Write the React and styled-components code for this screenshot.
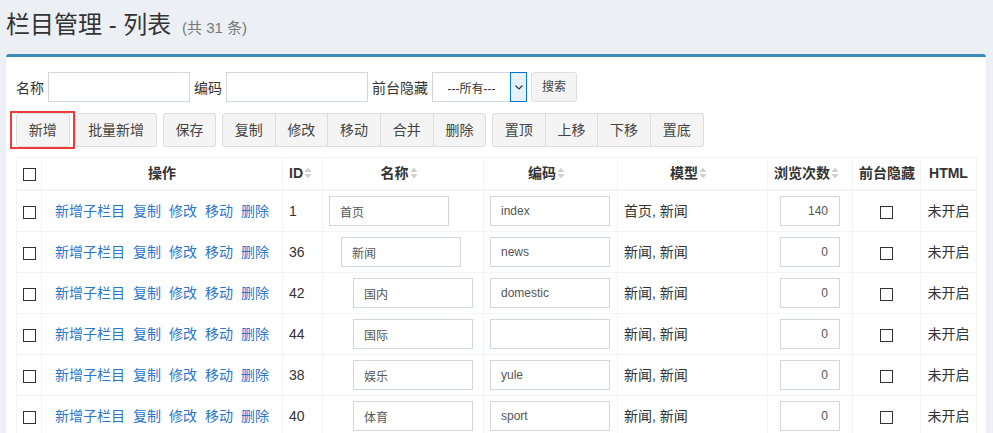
import React from "react";
import styled, { createGlobalStyle } from "styled-components";

const Global = createGlobalStyle`
  html, body { margin: 0; padding: 0; background: #ecf0f5; }
  body {
    font-family: "Liberation Sans", "Noto Sans CJK SC", sans-serif;
    font-size: 14px;
    color: #333;
  }
  * { box-sizing: border-box; }
`;

const Page = styled.div`
  padding: 10px 7px 0 6px;
`;

const Title = styled.h1`
  margin: 0;
  height: 30px;
  font-size: 24px;
  line-height: 30px;
  font-weight: 400;
  color: #333;
  white-space: nowrap;
`;

const Sub = styled.small`
  font-size: 15px;
  line-height: 1;
  color: #777;
  padding-left: 4px;
`;

const Panel = styled.div`
  margin-top: 14px;
  background: #fff;
  border-top: 3px solid #3c8dbc;
  border-radius: 3px;
  box-shadow: 0 1px 1px rgba(0, 0, 0, 0.1);
  padding: 15px 10px 10px;
`;

const FormRow = styled.div`
  display: flex;
  align-items: center;
  gap: 4px;
  height: 30px;
`;

const Label = styled.span`
  font-size: 14px;
  color: #333;
  white-space: nowrap;
`;

const TextInput = styled.input`
  width: ${(p) => p.$w || 142}px;
  height: 30px;
  border: 1px solid #d2d6de;
  border-radius: 0;
  padding: 0 ${(p) => (p.$right ? 11 : 10)}px;
  font-family: inherit;
  font-size: 12px;
  color: #555;
  text-align: ${(p) => (p.$right ? "right" : "left")};
  margin-left: ${(p) => p.$indent || 0}px;
  outline: none;
  background: #fff;
  vertical-align: middle;
`;

const SelectBox = styled.div`
  width: 95px;
  height: 30px;
  border: 1px solid #d2d6de;
  display: flex;
  align-items: stretch;
  background: #fff;
`;

const SelectText = styled.span`
  flex: 1;
  font-size: 12px;
  color: #333;
  display: flex;
  align-items: center;
  justify-content: center;
`;

const SelectArrow = styled.span`
  width: 17px;
  margin: -1px -1px -1px 0;
  border: 1px solid #0078d7;
  background: #e5f1fb;
  display: flex;
  align-items: center;
  justify-content: center;
`;

const Btn = styled.button`
  font-family: inherit;
  font-size: ${(p) => (p.$sm ? 12 : 14)}px;
  line-height: ${(p) => (p.$sm ? 18 : 20)}px;
  padding: ${(p) => (p.$sm ? "5px 10px" : "6px 11.85px")};
  background: #f4f4f4;
  border: 1px solid #ddd;
  border-radius: 3px;
  color: #444;
  white-space: nowrap;
  cursor: pointer;
  position: relative;
`;

const Toolbar = styled.div`
  display: flex;
  align-items: center;
  gap: 5.6px;
  margin-top: 11px;
`;

const Group = styled.div`
  display: flex;
  & > ${Btn} { border-radius: 0; }
  & > ${Btn} + ${Btn} { margin-left: -1px; }
  & > ${Btn}:first-child { border-radius: 3px 0 0 3px; }
  & > ${Btn}:last-child { border-radius: 0 3px 3px 0; }
`;

const Highlight = styled.div`
  position: relative;
  display: flex;
  &::after {
    content: "";
    position: absolute;
    left: -6px;
    right: -5px;
    top: -2px;
    bottom: -2px;
    border: 2px solid #f03a3a;
    pointer-events: none;
  }
`;

const Table = styled.table`
  margin-top: 10px;
  width: 100%;
  border-collapse: collapse;
  table-layout: fixed;
  border: 1px solid #f4f4f4;
`;

const Th = styled.th`
  border: 1px solid #f4f4f4;
  border-bottom-width: 2px;
  padding: 5px 6px;
  line-height: 21px;
  font-weight: 700;
  font-size: 14px;
  color: #333;
  text-align: center;
  white-space: nowrap;
  vertical-align: middle;
`;

const Td = styled.td`
  border: 1px solid #f4f4f4;
  padding: 5px 6px;
  height: 41px;
  line-height: 20px;
  font-size: 14px;
  color: #333;
  text-align: ${(p) => p.$align || "left"};
  white-space: nowrap;
  vertical-align: middle;
`;

const Check = styled.input.attrs({ type: "checkbox" })`
  appearance: none;
  -webkit-appearance: none;
  width: 13px;
  height: 13px;
  margin: 0;
  border: 1px solid #333;
  background: #fff;
  vertical-align: middle;
  display: inline-block;
`;

const Links = styled.span`
  display: inline-flex;
  gap: 8px;
`;

const Link = styled.a`
  color: #2a76cf;
  text-decoration: none;
  cursor: pointer;
`;

const SortWrap = styled.span`
  display: inline-block;
  width: 8px;
  height: 14px;
  margin: 0 8px 0 1px;
  vertical-align: -2px;
`;

const SortIcon = () => (
  <SortWrap>
    <svg width="8" height="14" viewBox="0 0 8 14">
      <path d="M0.5 6 L4 1.5 L7.5 6 Z" fill="#cfcfcf" />
      <path d="M0.5 8 L7.5 8 L4 12.5 Z" fill="#cfcfcf" />
    </svg>
  </SortWrap>
);

const Chevron = () => (
  <svg width="8" height="5" viewBox="0 0 8 5">
    <path d="M0.5 0.5 L4 4 L7.5 0.5" fill="none" stroke="#333" strokeWidth="1.1" />
  </svg>
);

const rows = [
  { id: 1, name: "首页", indent: 0, code: "index", model: "首页, 新闻", views: 140 },
  { id: 36, name: "新闻", indent: 12, code: "news", model: "新闻, 新闻", views: 0 },
  { id: 42, name: "国内", indent: 24, code: "domestic", model: "新闻, 新闻", views: 0 },
  { id: 44, name: "国际", indent: 24, code: "", model: "新闻, 新闻", views: 0 },
  { id: 38, name: "娱乐", indent: 24, code: "yule", model: "新闻, 新闻", views: 0 },
  { id: 40, name: "体育", indent: 24, code: "sport", model: "新闻, 新闻", views: 0 },
];

const cols = [25, 241, 40, 161, 134, 150, 85, 68, 56];

export default function App() {
  return (
    <>
      <Global />
      <Page>
        <Title>
          栏目管理 - 列表 <Sub>(共 31 条)</Sub>
        </Title>
        <Panel>
          <FormRow>
            <Label>名称</Label>
            <TextInput />
            <Label>编码</Label>
            <TextInput />
            <Label>前台隐藏</Label>
            <SelectBox>
              <SelectText>---所有---</SelectText>
              <SelectArrow>
                <Chevron />
              </SelectArrow>
            </SelectBox>
            <Btn $sm>搜索</Btn>
          </FormRow>
          <Toolbar>
            <Highlight>
              <Btn>新增</Btn>
            </Highlight>
            <Btn>批量新增</Btn>
            <Btn>保存</Btn>
            <Group>
              <Btn>复制</Btn>
              <Btn>修改</Btn>
              <Btn>移动</Btn>
              <Btn>合并</Btn>
              <Btn>删除</Btn>
            </Group>
            <Group>
              <Btn>置顶</Btn>
              <Btn>上移</Btn>
              <Btn>下移</Btn>
              <Btn>置底</Btn>
            </Group>
          </Toolbar>
          <Table>
            <colgroup>
              {cols.map((w, i) => (
                <col key={i} style={{ width: w }} />
              ))}
            </colgroup>
            <thead>
              <tr>
                <Th>
                  <Check />
                </Th>
                <Th>操作</Th>
                <Th>
                  ID
                  <SortIcon />
                </Th>
                <Th>
                  名称
                  <SortIcon />
                </Th>
                <Th>
                  编码
                  <SortIcon />
                </Th>
                <Th>
                  模型
                  <SortIcon />
                </Th>
                <Th>
                  浏览次数
                  <SortIcon />
                </Th>
                <Th>前台隐藏</Th>
                <Th>HTML</Th>
              </tr>
            </thead>
            <tbody>
              {rows.map((r) => (
                <tr key={r.id}>
                  <Td $align="center">
                    <Check />
                  </Td>
                  <Td $align="center">
                    <Links>
                      <Link>新增子栏目</Link>
                      <Link>复制</Link>
                      <Link>修改</Link>
                      <Link>移动</Link>
                      <Link>删除</Link>
                    </Links>
                  </Td>
                  <Td>{r.id}</Td>
                  <Td>
                    <TextInput $w={120} $indent={r.indent} value={r.name} readOnly />
                  </Td>
                  <Td>
                    <TextInput $w={120} value={r.code} readOnly />
                  </Td>
                  <Td>{r.model}</Td>
                  <Td $align="center">
                    <TextInput $w={60} $right value={r.views} readOnly />
                  </Td>
                  <Td $align="center">
                    <Check />
                  </Td>
                  <Td $align="center">未开启</Td>
                </tr>
              ))}
            </tbody>
          </Table>
        </Panel>
      </Page>
    </>
  );
}
